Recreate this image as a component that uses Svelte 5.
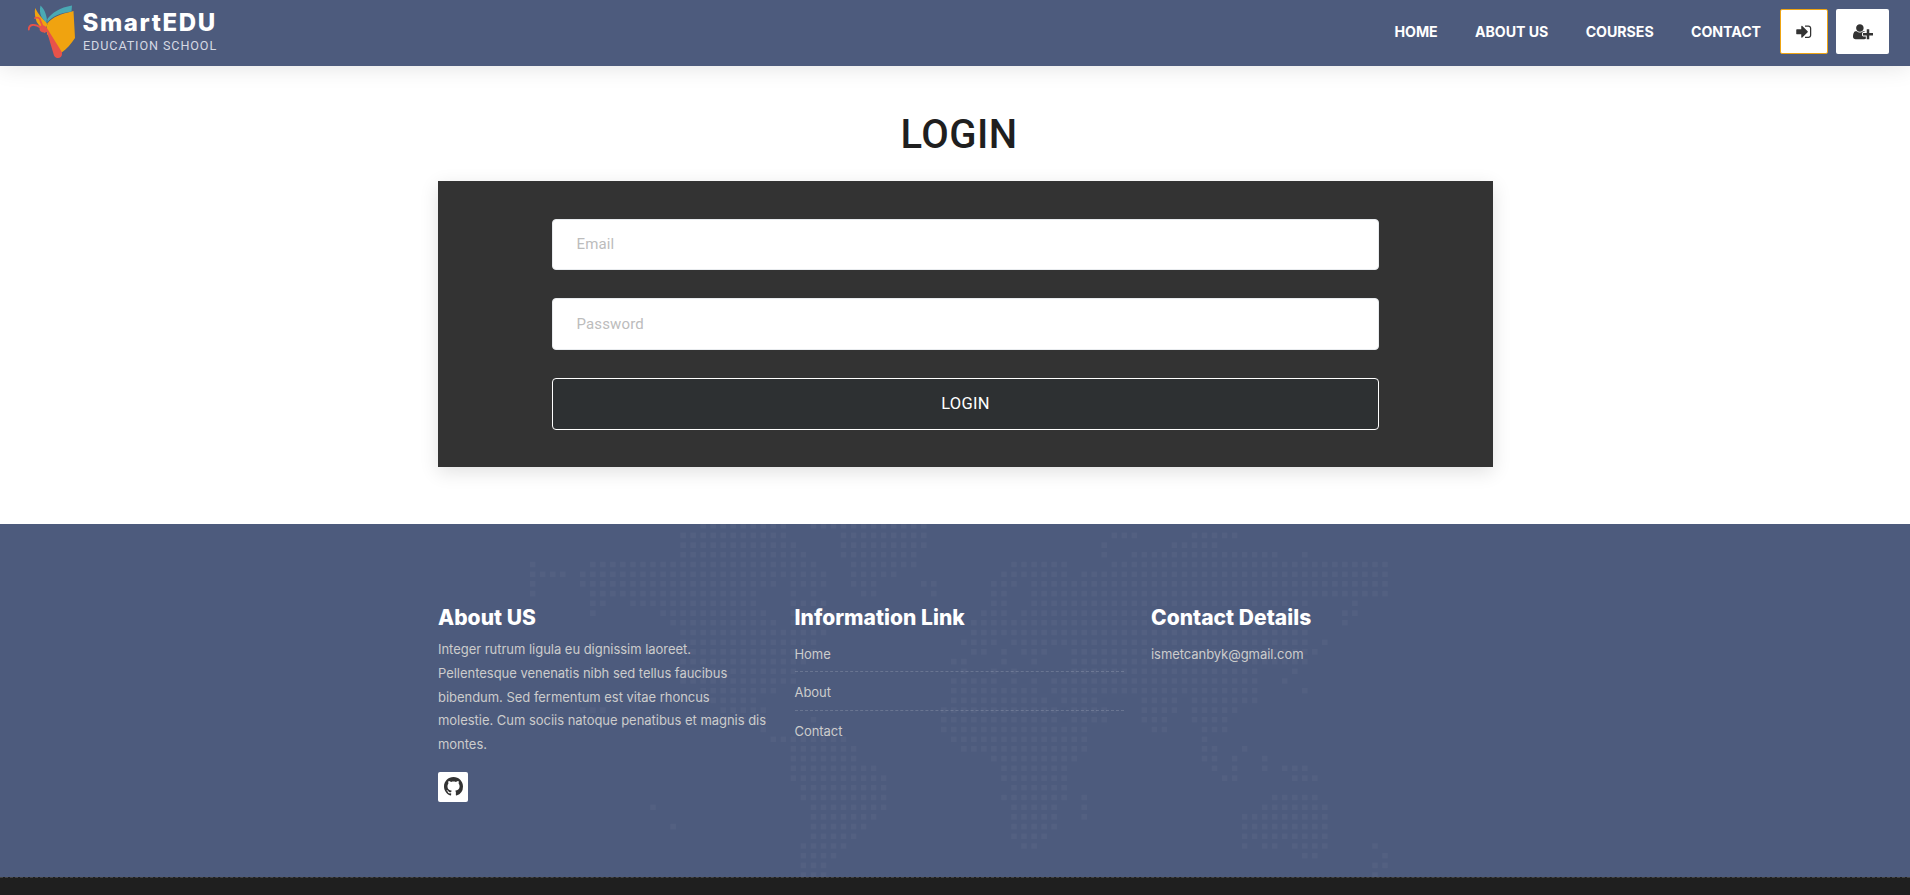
<script>
  const nav = ['HOME', 'ABOUT US', 'COURSES', 'CONTACT'];
  const links = ['Home', 'About', 'Contact'];

  // Dotted world map: for each grid row, the column runs that hold dots.
  const rows = [
    '17-25 28-39', '15-25 31-39 58-60 66-70', '15-26 31-39 57 64-68', '15-27 31-38 57 60-74 77',
    '0 6-25 26-28 32-38 48-53 58-85', '0-3 5-29 32-36 47-53 55-85', '0 5-24 26-29 32-34 39-40 46-48 50-85',
    '0 6-22 26 28 33-34 40 46-47 50-85', '6-7 10-22 26-29 46-47 50-77 82', '6 13-23 26-30 45-47 49-77 81-82',
    '14-24 26-29 44-77 81', '15-25 26-29 44-77', '15-28 43-46 48-77 79', '15-26 28 44-45 47 49-51 54-78',
    '15-27 42-43 47 50 54-77', '15-26 43 46 48 54-72 76', '15-26 42-46 48 50 52-72 75', '17-24 42-50 52-72 77',
    '17-22 42-51 53-56 61-64 66-72', '5-7 19-23 41-52 54-57 61-64 66-70', '21-23 28 41-52 54-57 61-63 66-69',
    '23 28-30 41-53 54-55 62-63 67-69', '24-31 42-55 67', '26-32 43-55 67-68 71', '26-32 46-54 67-68 70 73',
    '26-34 47-53 68 70 73 75-77', '26-35 47-53 69-70 76-78', '27-35 48-53', '27-35 47-53 55 74-78',
    '12 28-35 48-52 55 73-79', '28-34 48-52 55 71-79', '14 28-33 48-52 71-79', '28-32 48-51 71-79',
    '27-31 49-50 71 73-74 76-79 84', '27-30 77-78 85', '27-29 84-85', '27-29 84'
  ];
  const dots = rows.flatMap((row, y) =>
    row.split(' ').flatMap((run) => {
      const [a, b = a] = run.split('-').map(Number);
      return Array.from({ length: b - a + 1 }, (_, i) =>
        `M${(532.7 + (a + i) * 10.027 - 2.8).toFixed(1)} ${(y * 9.706 - 1.1).toFixed(1)}h5.6v5.6h-5.6z`);
    })
  ).join('');
</script>

<header>
  <a class="brand" href="#home">
    <svg width="50" height="56" viewBox="25 3 50 56" aria-hidden="true">
      <path d="M35.200 8c-1 4 0 10 1.500 14l8 11 3-10C42 19 38 14 35.200 8zM47 24c5-7 14-10 26.500-13l1.500 27c-4 6-8 11-14 15L47 34z" fill="#f0a30f" />
      <path d="M40.500 5.500c4 4 5.500 8 6.500 14 5-7 13-12 25-14l-.5 6C60 13 52 16 47 23c-5-4-8.500-9-6.500-17.500z" fill="#4aa9b4" />
      <path d="M47 19.500v4" stroke="#4d5b7d" stroke-width="0.800" />
      <path d="M40 26c3-2 6 0 7.500 3l14 22.500c2.500 6-4.500 9-7.500 4l-7-23.500c-3.500 1.500-7.500 0-7.500-3z" fill="#e8534a" />
      <path d="M35 18c3-1 5 0 5.500 3l2 5M28.800 29.500c0-5 5-6.500 12.500-1.500" fill="none" stroke="#e8534a" stroke-width="1.800" stroke-linecap="round" />
    </svg>
    <span class="name"><strong>SmartEDU</strong><small>EDUCATION SCHOOL</small></span>
  </a>
  <nav>
    {#each nav as item}<a href="#{item}">{item}</a>{/each}
  </nav>
  <a class="btn outlined" href="#login" aria-label="Login">
    <svg width="17.500" height="17.500" viewBox="0 0 1792 1792"><path d="M1312 896q0 26-19 45l-544 544q-19 19-45 19t-45-19-19-45v-288h-448q-26 0-45-19t-19-45v-384q0-26 19-45t45-19h448v-288q0-26 19-45t45-19 45 19l544 544q19 19 19 45zm352-352v704q0 119-84.500 203.500t-203.500 84.500h-320q-13 0-22.500-9.500t-9.500-22.500q0-4-1-20t-.5-26.500 3-23.500 10-19.500 20.500-6.500h320q66 0 113-47t47-113v-704q0-66-47-113t-113-47h-312l-11.500-1-11.500-3-8-5.500-7-9-2-13.500q0-4-1-20t-.5-26.500 3-23.500 10-19.500 20.500-6.500h320q119 0 203.500 84.500t84.500 203.500z" /></svg>
  </a>
  <a class="btn" href="#register" aria-label="Register">
    <svg width="20" height="17.500" viewBox="0 0 2048 1792"><path d="M704 896q-159 0-271.500-112.500t-112.500-271.500 112.500-271.500 271.500-112.500 271.500 112.500 112.500 271.500-112.500 271.500-271.500 112.500zm960 128h352q13 0 22.500 9.500t9.500 22.500v192q0 13-9.500 22.500t-22.500 9.500h-352v352q0 13-9.500 22.500t-22.500 9.500h-192q-13 0-22.500-9.500t-9.500-22.500v-352h-352q-13 0-22.500-9.500t-9.500-22.500v-192q0-13 9.500-22.500t22.500-9.500h352v-352q0-13 9.500-22.500t22.500-9.500h192q13 0 22.500 9.500t9.500 22.500v352zm-736 224q0 52 38 90t90 38h256v238q-68 50-171 50h-874q-121 0-194-69t-73-190q0-53 3.500-103.500t14-109 26.500-108.500 43-97.500 62-81 85.500-53.500 111.500-20q19 0 39 17 79 61 154.500 91.500t164.500 30.500 164.500-30.500 154.500-91.500q20-17 39-17 132 0 217 96h-223q-52 0-90 38t-38 90v192z" /></svg>
  </a>
</header>

<main>
  <h1>LOGIN</h1>
  <form onsubmit={(e) => e.preventDefault()}>
    <input type="email" placeholder="Email" />
    <input type="password" placeholder="Password" />
    <button>LOGIN</button>
  </form>
</main>

<footer>
  <svg class="map" width="1910" height="353" viewBox="0 0 1910 353" aria-hidden="true"><path d={dots} /></svg>
  <div class="columns">
    <section>
      <h2>About US</h2>
      <p>Integer rutrum ligula eu dignissim laoreet.<br />Pellentesque venenatis nibh sed tellus faucibus<br />bibendum. Sed fermentum est vitae rhoncus<br />molestie. Cum sociis natoque penatibus et magnis dis<br />montes.</p>
      <a class="github" href="#github" aria-label="GitHub">
        <svg width="19" height="19" viewBox="0 0 16 16"><path d="M8 0C3.580 0 0 3.580 0 8c0 3.540 2.290 6.530 5.470 7.590.4.07.55-.17.55-.38 0-.19-.01-.82-.01-1.490-2.010.37-2.530-.49-2.690-.94-.09-.23-.48-.94-.82-1.130-.28-.15-.68-.52-.01-.53.63-.01 1.080.58 1.230.82.72 1.210 1.870.87 2.330.66.07-.52.28-.87.51-1.070-1.780-.2-3.640-.89-3.640-3.950 0-.87.31-1.590.82-2.150-.08-.2-.36-1.020.08-2.120 0 0 .67-.21 2.200.82.64-.18 1.320-.27 2-.27s1.360.09 2 .27c1.530-1.040 2.200-.82 2.200-.82.44 1.100.16 1.920.08 2.120.51.56.82 1.270.82 2.150 0 3.070-1.870 3.750-3.650 3.950.29.25.54.73.54 1.480 0 1.070-.01 1.930-.01 2.200 0 .21.15.46.55.38A8.010 8.010 0 0 0 16 8c0-4.420-3.580-8-8-8z" /></svg>
      </a>
    </section>
    <section>
      <h2>Information Link</h2>
      <ul>{#each links as link}<li><a href="#{link}">{link}</a></li>{/each}</ul>
    </section>
    <section>
      <h2>Contact Details</h2>
      <ul><li><a href="#mail">ismetcanbyk@gmail.com</a></li></ul>
    </section>
  </div>
</footer>
<div class="copyright"></div>

<style>
  :global(body) { margin: 0; background: #fff; overflow: hidden; font-family: Roboto, sans-serif; }
  a { color: inherit; text-decoration: none; }
  * { box-sizing: border-box; }

  header {
    position: relative; display: flex; align-items: center; height: 66px; padding: 0 21px 0 25px;
    background: #4d5b7d; box-shadow: 0 0 25px rgba(0, 0, 0, 0.12);
  }
  .brand { display: flex; margin-right: auto; color: #fff; }
  .brand svg { margin-top: -4px; }
  .name { display: flex; flex-direction: column; margin-left: 7.500px; }
  .name strong { font: 800 24px/28px Inter, sans-serif; letter-spacing: 1.600px; margin-top: 2px; }
  .name small { font-size: 12.600px; line-height: 16px; letter-spacing: 0.900px; color: #d5d9e3; margin: 1px 0 0 0.500px; }
  nav { display: flex; gap: 37.300px; margin-right: 19px; }
  nav a { color: #fff; font: 700 14.200px/20px Inter, sans-serif; letter-spacing: -0.050px; margin-top: -2px; }
  .btn {
    display: flex; align-items: center; justify-content: center; height: 45px; width: 53px; margin: -3px 0 0 8px;
    background: #fff; border-radius: 2px; fill: #333;
  }
  .outlined { width: 48px; margin-left: 0; border: 1px solid #eea412; }

  main { height: 458px; padding: 45px 417px 0 438px; }
  h1 { margin: 0 13px 0 0; font-size: 40px; font-weight: 500; line-height: 48px; letter-spacing: 0.400px; color: #1f1f1f; text-align: center; }
  form {
    display: flex; flex-direction: column; gap: 28px; height: 286px; margin-top: 22px; padding: 38px 114px 37px;
    background: #333; box-shadow: 0 5px 18px rgba(0, 0, 0, 0.12);
  }
  input, button { height: 52px; border-radius: 4px; font-family: inherit; }
  input { border: 1px solid #e8ebee; background: #fff; padding: 0 23.500px; font-size: 15px; letter-spacing: 0.150px; outline: 0; }
  input:first-child { height: 51px; padding-bottom: 1px; }
  input::placeholder { color: #bcbcbc; opacity: 1; }
  button { border: 1px solid #fff; background: #2d3032; color: #fff; font-size: 16.500px; font-weight: 400; letter-spacing: 0.300px; padding: 0 0 2px; }

  footer { position: relative; height: 353px; padding: 81px 0 0 438px; background: #4d5b7d; color: #ccc; font: 13px/23.750px Inter, sans-serif; }
  .map { position: absolute; inset: 0; fill: rgba(255, 255, 255, 0.035); }
  .columns { position: relative; display: grid; grid-template-columns: 329px 329px 329px; column-gap: 27.500px; }
  h2 { margin: 0; color: #fff; font-size: 21px; font-weight: 800; line-height: 26px; letter-spacing: 0.030px; white-space: nowrap; }
  p { margin: 7px 0 15px; white-space: nowrap; letter-spacing: -0.030px; }
  ul { list-style: none; margin: 3px 0 0; padding: 0; }
  li { height: 39px; padding-top: 9px; border-bottom: 1px dashed rgba(255, 255, 255, 0.16); letter-spacing: -0.060px; }
  li:first-child { height: 38px; }
  li:last-child { border: 0; }
  .github { display: flex; align-items: center; justify-content: center; width: 30px; height: 30px; border-radius: 2px; background: #fff; fill: #333; }
  .copyright { height: 18px; background: #1f1f1f; border-top: 1px dashed #444; }
</style>
